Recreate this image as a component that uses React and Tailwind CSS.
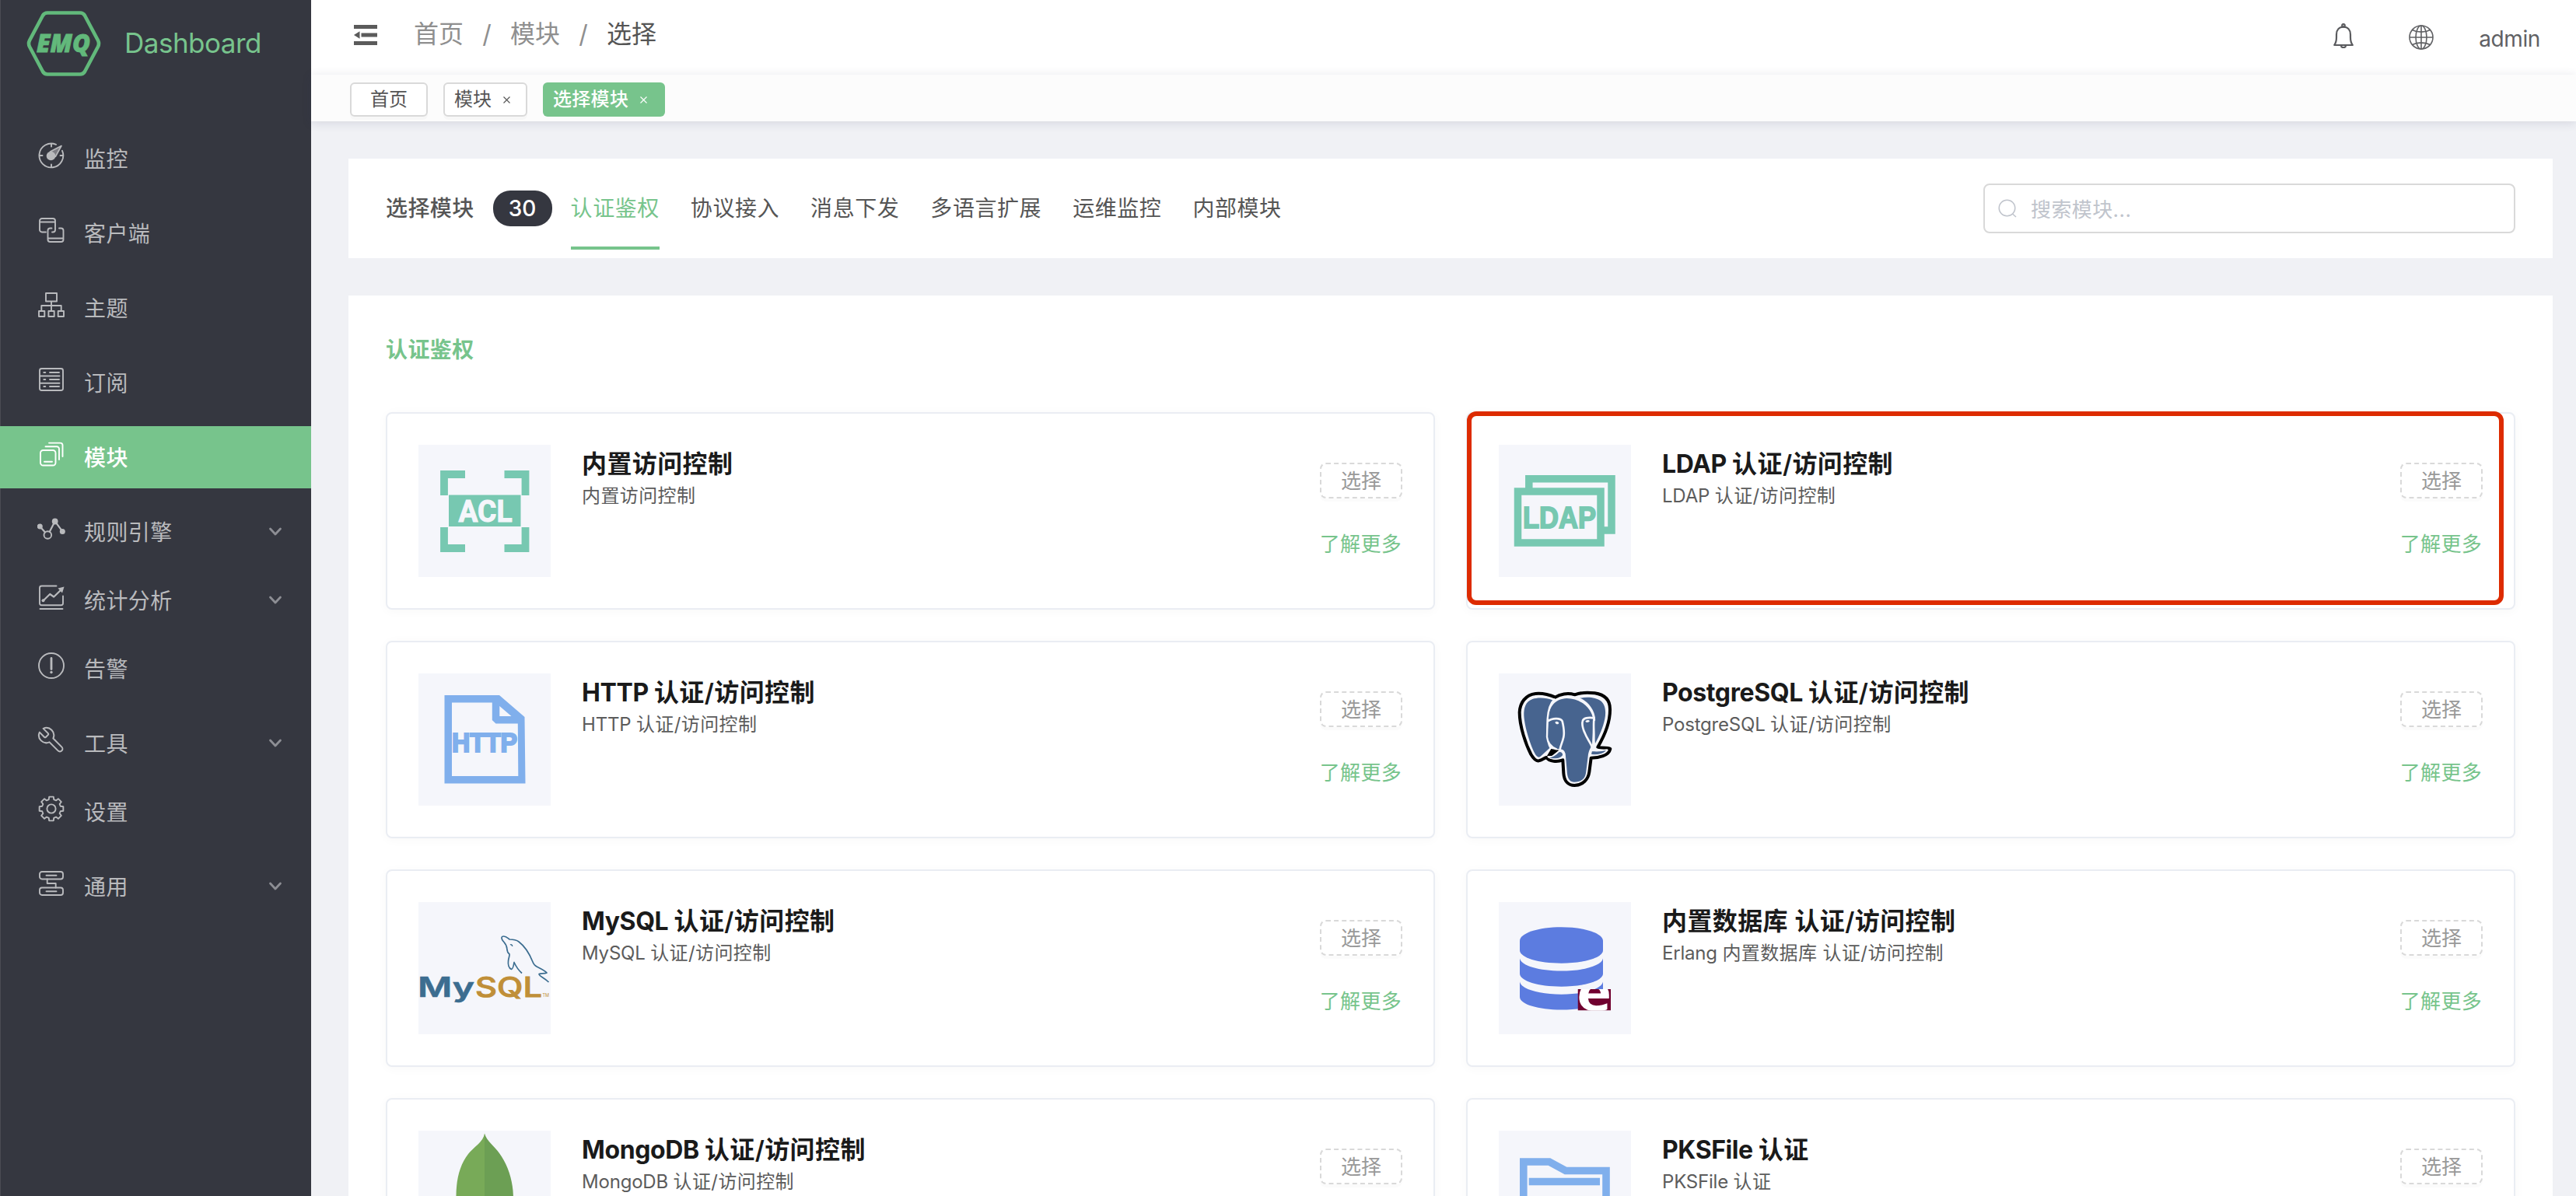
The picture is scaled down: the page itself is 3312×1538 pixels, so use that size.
import React from "react";

const FONT = "font-[Inter,'Noto_Sans_CJK_SC',sans-serif]";

/* ---------- sidebar icons ---------- */

function Glyph({ children }) {
  return (
    <svg
      className="h-9 w-9 shrink-0 -translate-y-1"
      viewBox="0 0 36 36"
      fill="none"
      stroke="currentColor"
      strokeWidth="1.9"
      strokeLinecap="round"
      strokeLinejoin="round"
    >
      {children}
    </svg>
  );
}

const gearPath = (() => {
  const pts = [];
  for (let i = 0; i < 8; i++) {
    const a = (i * Math.PI) / 4 - Math.PI / 2;
    for (const [d, r] of [[-0.27, 12.2], [-0.18, 15.6], [0.18, 15.6], [0.27, 12.2]]) {
      pts.push(`${(18 + r * Math.cos(a + d)).toFixed(2)} ${(18 + r * Math.sin(a + d)).toFixed(2)}`);
    }
  }
  return `M${pts.join("L")}Z`;
})();

const icons = {
  monitor: (
    <Glyph>
      <path d="M24 3.800A15.400 15.400 0 1 0 32 11.800" />
      <path d="M18 3v3.500M18 29.500V33M3 18h3.500M29.500 18H33" />
      <circle cx="17.500" cy="18.500" r="5.800" fill="currentColor" stroke="none" />
      <path d="M23.300 19.500L31 5.500L16.500 13L20 15.500Z" fill="currentColor" fillOpacity=".55" strokeWidth="1.600" />
    </Glyph>
  ),
  clients: (
    <Glyph>
      <path d="M11 20.5H6a3 3 0 0 1-3-3V6a3 3 0 0 1 3-3h14a3 3 0 0 1 3 3v5.5M3.5 7.5h19" />
      <path d="M18.5 15.5h-2a3 3 0 0 0-3 3V30a3 3 0 0 0 3 3h14a3 3 0 0 0 3-3V18.500a3 3 0 0 0-3-3H28M14 28.500h19M23 11.500v6a3 3 0 0 1-3 3h-1" />
    </Glyph>
  ),
  topics: (
    <Glyph>
      <path d="M11 3h14v10.500H11zM18 13.500V25M5.300 25v-6h25.400v6M2 26h7.300v7H2zM14.400 26h7.300v7h-7.300zM26.700 26H34v7h-7.300z" />
    </Glyph>
  ),
  subs: (
    <Glyph>
      <rect x="3" y="4" width="30" height="28" rx="2.5" />
      <path d="M3 13.500h25.500M3 22.700h25.500M8.300 9h2M16 9h12M8.300 18h2M16 18h12M8.300 27h2M16 27h12" />
    </Glyph>
  ),
  modules: (
    <Glyph>
      <rect x="4" y="13" width="19.500" height="19.500" rx="3.500" />
      <path d="M9 27.700h10M10.500 8.300H25a3 3 0 0 1 3 3V25M15 3.600h14.500a3 3 0 0 1 3 3V21" />
    </Glyph>
  ),
  rules: (
    <Glyph>
      <path d="M3.300 15l6.700 7.500M15.800 21.700l6.900-13.400M22.700 8.300l9.600 13" strokeWidth="2.200" />
      <circle cx="13.300" cy="26" r="4.800" />
      <g fill="currentColor" stroke="none">
        <circle cx="3.300" cy="15" r="3.500" />
        <circle cx="22.700" cy="8.500" r="3.900" />
        <circle cx="32.300" cy="21.500" r="3.500" />
      </g>
    </Glyph>
  ),
  stats: (
    <Glyph>
      <path d="M24.500 3.500H5.500a2.500 2.500 0 0 0-2.500 2.500v19.800a2.500 2.500 0 0 0 2.500 2.500h25a2.500 2.500 0 0 0 2.500-2.500V16.500M3.500 33h29" />
      <path d="M7.500 22.500l8.700-8.500 5 3.500L31 8" strokeWidth="2.200" />
      <circle cx="7.500" cy="22.300" r="2" fill="currentColor" stroke="none" />
      <path d="M34.500 4.500l-8 2 5.500 6z" fill="currentColor" stroke="none" />
    </Glyph>
  ),
  alarm: (
    <Glyph>
      <circle cx="18" cy="18" r="16" />
      <path d="M18 8.500v14" strokeWidth="2.800" />
      <circle cx="18" cy="26.500" r="1.700" fill="currentColor" stroke="none" />
    </Glyph>
  ),
  tools: (
    <Glyph>
      <g transform="translate(37.200 -1.200) scale(-1.600 1.600)" strokeWidth="1.250">
        <path d="M14.700 6.300a1 1 0 0 0 0 1.400l1.600 1.600a1 1 0 0 0 1.400 0l3.770-3.770a6 6 0 0 1-7.940 7.940l-6.910 6.910a2.120 2.120 0 0 1-3-3l6.910-6.910a6 6 0 0 1 7.940-7.940l-3.760 3.760z" />
      </g>
    </Glyph>
  ),
  settings: (
    <Glyph>
      <path d={gearPath} />
      <circle cx="18" cy="18" r="5.600" />
    </Glyph>
  ),
  general: (
    <Glyph>
      <rect x="3" y="3" width="30" height="9.500" rx="3" />
      <rect x="3" y="23.500" width="30" height="9.500" rx="3" />
      <path d="M11.500 7.700h13M11.500 28.200h13M12.700 12.500V18h11v5.500" />
    </Glyph>
  ),
};

const menu = [
  { icon: "monitor", label: "监控" },
  { icon: "clients", label: "客户端" },
  { icon: "topics", label: "主题" },
  { icon: "subs", label: "订阅" },
  { icon: "modules", label: "模块", active: true },
  { icon: "rules", label: "规则引擎", sub: true },
  { icon: "stats", label: "统计分析", sub: true },
  { icon: "alarm", label: "告警" },
  { icon: "tools", label: "工具", sub: true },
  { icon: "settings", label: "设置" },
  { icon: "general", label: "通用", sub: true },
];

function Sidebar() {
  return (
    <aside className="h-full w-[400px] shrink-0 border-l border-[#4a4b53] bg-[#353740]">
      <div className="flex h-28 items-center gap-[30px] pl-[33px]">
        <svg className="h-[86px] w-24" viewBox="0 0 96 86" fill="none">
          <path
            d="M27 3.500H69Q73 3.500 75 7L92 39Q94 43 92 47L75 79Q73 82.500 69 82.500H27Q23 82.500 21 79L4 47Q2 43 4 39L21 7Q23 3.500 27 3.500Z"
            stroke="#62b97b"
            strokeWidth="4.600"
          />
          <text
            x="13"
            y="54"
            fontFamily="Open Sans, sans-serif"
            fontSize="31"
            fontWeight="800"
            fontStyle="italic"
            textLength="69"
            lengthAdjust="spacingAndGlyphs"
            fill="#62b97b"
            stroke="#62b97b"
            strokeWidth=".8"
          >
            EMQ
          </text>
        </svg>
        <span className="-translate-y-px text-[35px] leading-none tracking-[-0.5px] text-[#77c48d]">Dashboard</span>
      </div>
      <nav className="mt-[52px]">
        {menu.map((m) => (
          <div
            key={m.label}
            className={
              "-ml-px flex h-20 items-center pl-12 pr-9 " +
              (m.active ? "bg-[#77c48c] text-white " : "text-[#b9babd] ") +
              (m.sub ? "mb-2" : "mb-4")
            }
          >
            {icons[m.icon]}
            <span className={"ml-6 flex-1 translate-y-px text-[28px] leading-10 tracking-[0.4px] " + (m.active ? "font-medium" : "")}>
              {m.label}
            </span>
            {m.sub && (
              <svg className="h-4 w-5 text-[#8d8e94]" viewBox="0 0 20 16" fill="none" stroke="currentColor" strokeWidth="2.800" strokeLinecap="round" strokeLinejoin="round">
                <path d="M3.500 4L10 11l6.500-7" />
              </svg>
            )}
          </div>
        ))}
      </nav>
    </aside>
  );
}

/* ---------- top area ---------- */

function Header() {
  return (
    <header className="flex h-24 shrink-0 items-center bg-white pl-[55px] pr-[46px]">
      <svg className="h-[26px] w-[30px] -translate-y-[3px]" viewBox="0 0 30 26" fill="#5b5b5b">
        <path d="M0 0h30v5H0zM9.500 10.500H30v5H9.500zM0 21h30v5H0zM0 13l7.500-4.800v9.600z" />
      </svg>
      <div className="ml-[47px] flex -translate-y-[4px] text-[32px] leading-[48px] text-[#8f8f8f]">
        <span>首页</span>
        <span className="w-[60px] text-center">/</span>
        <span>模块</span>
        <span className="w-[60px] text-center">/</span>
        <span className="text-[#555]">选择</span>
      </div>
      <div className="ml-auto flex items-center">
        <svg className="h-8 w-[26px] -translate-y-[2px]" viewBox="0 0 26 32" fill="none" stroke="#5a5b5e" strokeWidth="2.200" strokeLinejoin="round">
          <circle cx="13" cy="2.800" r="1.800" />
          <path d="M1.300 28C3.500 25 4 22 4 18V14.500C4 8.500 7.500 4.700 13 4.700S22 8.500 22 14.500V18c0 4 .5 7 2.700 10z" />
          <path d="M10 28.500a3 2.600 0 0 0 6 0" />
        </svg>
        <svg className="ml-[71px] h-8 w-8" viewBox="0 0 32 32" fill="none" stroke="#606164" strokeWidth="1.600">
          <circle cx="16" cy="16" r="15" />
          <ellipse cx="16" cy="16" rx="7" ry="15" />
          <path d="M1 16h30M16 1v30M4.500 6.500C11 10 21 10 27.500 6.500M4.500 25.500C11 22 21 22 27.500 25.500" />
        </svg>
        <span className="ml-[58px] translate-y-[2px] text-[28px] leading-10 tracking-[-0.4px] text-[#606164]">admin</span>
      </div>
    </header>
  );
}

function Cross() {
  return (
    <svg className="h-[9px] w-[9px]" viewBox="0 0 9 9" stroke="currentColor" strokeWidth="1.100">
      <path d="M.5.5l8 8M8.500.5l-8 8" />
    </svg>
  );
}

function TagBar() {
  return (
    <div className="relative flex h-[60px] shrink-0 gap-5 bg-[#fcfcfc] pl-[50px] pt-[10px] text-2xl leading-10 shadow-[0_2px_12px_rgba(40,50,90,0.14)]">
      <div className="flex h-11 w-[100px] items-center justify-center rounded-md border-2 border-[#d9d9d9] bg-white text-[#555] shadow-[0_4px_0_rgba(0,0,0,0.02)]">
        首页
      </div>
      <div className="flex h-11 w-[108px] items-center gap-[15px] rounded-md border-2 border-[#d9d9d9] bg-white pl-3 text-[#555] shadow-[0_4px_0_rgba(0,0,0,0.02)]">
        模块
        <Cross />
      </div>
      <div className="flex h-11 w-[157px] items-center gap-[15px] rounded-md bg-[#77c48c] pl-[13px] font-medium tracking-[0.3px] text-white">
        选择模块
        <Cross />
      </div>
    </div>
  );
}

const tabs = ["认证鉴权", "协议接入", "消息下发", "多语言扩展", "运维监控", "内部模块"];

function FilterBar() {
  return (
    <section className="flex h-32 items-center bg-white px-12 text-[28px] tracking-[0.4px] text-[#555]">
      <h1 className="font-medium">选择模块</h1>
      <span className="ml-[24px] flex h-[46px] w-[76px] items-center justify-center rounded-[22px] bg-[#353740] font-medium tracking-normal text-white">
        30
      </span>
      <nav className="ml-[24px] flex h-full items-end gap-[40px] pb-[11px] tracking-[0.56px]">
        {tabs.map((t, i) => (
          <span
            key={t}
            className={
              "flex h-[104px] items-center justify-center border-b-4 pt-px " +
              (i === 0 ? "border-[#77c48c] text-[#77c48c]" : "border-transparent")
            }
          >
            {t}
          </span>
        ))}
      </nav>
      <div className="ml-auto flex h-16 w-[684px] items-center rounded-lg border-2 border-[#d9d9d9] pl-[17px] text-[26px] text-[#c0c4cc]">
        <svg className="h-6 w-6" viewBox="0 0 24 24" fill="none" stroke="currentColor" strokeWidth="1.500">
          <circle cx="11.500" cy="11.500" r="10.300" />
          <path d="M18.500 19l4.500 4" />
        </svg>
        <span className="ml-[18px] translate-y-px">搜索模块...</span>
      </div>
    </section>
  );
}

/* ---------- module logos ---------- */

function Thumb({ children, box = "0 0 170 170" }) {
  return (
    <svg className="h-[170px] w-[170px] shrink-0 bg-[#f5f6fb]" viewBox={box} fill="none">
      {children}
    </svg>
  );
}

const logos = {
  acl: (
    <Thumb>
      <path d="M60 38H33v27M110.500 38h27v27M33 106v27h27M137.500 106v27h-27" stroke="#77c8b1" strokeWidth="9.800" />
      <path d="M39 64.500h92.500V105H39z" fill="#77c8b1" />
      <text x="51.500" y="98.500" fontFamily="Roboto, sans-serif" fontSize="38.500" fontWeight="700" textLength="69" lengthAdjust="spacingAndGlyphs" fill="#f5f6fb" stroke="#f5f6fb" strokeWidth="1">
        ACL
      </text>
    </Thumb>
  ),
  ldap: (
    <Thumb>
      <path d="M38.800 56V43.800H145V110h-10" stroke="#77c8b1" strokeWidth="9.500" />
      <path d="M24.500 60h106.500v66H24.500z" stroke="#77c8b1" strokeWidth="9.500" />
      <text x="31" y="107" fontFamily="Liberation Sans, sans-serif" fontSize="39.500" fontWeight="700" textLength="94" lengthAdjust="spacingAndGlyphs" fill="#77c8b1" stroke="#77c8b1" strokeWidth="1.900">
        LDAP
      </text>
    </Thumb>
  ),
  http: (
    <Thumb>
      <path
        fillRule="evenodd"
        d="M33.500 28H104L136.500 56L137.500 141.500H33.500ZM43 37.500V132H128.300L127.800 64.500H99.500L94.800 60V37.500ZM104.300 42V55H119.500Z"
        fill="#80afec"
      />
      <text x="43" y="100.500" fontFamily="Liberation Sans, sans-serif" fontSize="34.500" fontWeight="700" textLength="84" lengthAdjust="spacingAndGlyphs" fill="#80afec" stroke="#80afec" strokeWidth="2.200">
        HTTP
      </text>
    </Thumb>
  ),
  pg: (
    <Thumb box="0 0 510 510">
      <g strokeLinejoin="round" strokeLinecap="round">
        <path
          d="M218 92C190 80 165 76 142 78C103 83 82 112 80 150C80 205 105 275 124 312C136 332 148 340 157 336C166 334 178 325 184 324C195 340 225 342 247 334L250 385C252 415 268 432 292 432C325 431 345 408 349 380L356 326C385 326 425 318 430 291C428 284 400 290 382 284C405 245 430 190 429 138C429 105 410 82 370 76C340 72 315 74 293 82C265 74 235 80 218 92Z"
          fill="#f5f6fb"
          stroke="#000"
          strokeWidth="12"
        />
        <path d="M186 318L202 291L232 296L205 318Z" fill="#000" />
        <path d="M212 105C180 92 150 93 130 99C103 108 96 135 97 163C100 210 122 275 138 307C146 322 153 326 160 321L196 288C182 265 183 220 186 175C190 145 200 120 212 105Z" fill="#47648f" />
        <path d="M312 96C340 88 375 92 395 107C412 122 414 150 409 175C402 210 388 240 372 270C366 240 370 200 368 165C362 135 340 110 312 96Z" fill="#47648f" />
        <path d="M192 172C194 125 220 98 262 96C315 96 362 135 364 182L360 276C352 290 346 300 344 320L336 385C332 410 315 419 290 419C270 418 264 400 263 375L257 310C254 296 245 290 232 292C205 288 188 270 187 245Z" fill="#47648f" />
        <path d="M214 100C196 118 190 145 188 175L186 245C188 268 203 284 222 292M308 96C345 112 368 145 369 180" stroke="#f5f6fb" strokeWidth="7" />
        <path d="M190 184C205 172 238 170 245 184C250 205 254 225 250 245C245 268 238 278 236 293M368 172C345 168 325 172 323 185C320 200 325 215 332 230C340 252 355 268 360 285M368 172C362 200 372 240 364 285" stroke="#f5f6fb" strokeWidth="8" />
        <path d="M190 323C205 324 222 312 230 303C240 298 250 306 248 316C240 332 205 334 190 323ZM358 298C375 300 395 300 418 294C410 310 380 318 355 313Z" fill="#47648f" stroke="#f5f6fb" strokeWidth="4" />
        <path d="M217 188C221 183 230 184 232 191C229 199 220 197 217 188ZM334 185C338 179 348 179 351 184C347 190 338 191 334 185Z" fill="#f5f6fb" />
      </g>
    </Thumb>
  ),
  mysql: (
    <Thumb>
      <path
        d="M133 91.500C129 88 126 84 123 77.500C122.500 81 121.500 86 119.500 86.500C116 85 115 80 115.500 76C115.800 72 117.500 69 117 67C115 65.500 114 64 113.800 60C113.500 54 110 52 108 49C106 45.500 107 44 109.500 44C113 44 115 46.500 117 48C121 48 125 48 129 51C137 57 143 67 147 77C148 80 150 82 153 83.500C158 86 163 88.500 165 91C162 92.500 158 91.500 155 92.500C156 96 161 97 167.500 103"
        stroke="#3c6d90"
        strokeWidth="1.700"
        strokeLinejoin="round"
      />
      <path d="M118 55c1-1 2.500 0 2.800 2" stroke="#3c6d90" strokeWidth="1.300" />
      <text x="-1" y="121.500" fontFamily="Inter, sans-serif" fontSize="35" fontWeight="600" textLength="73" lengthAdjust="spacingAndGlyphs" fill="#3c6d90" stroke="#3c6d90" strokeWidth=".6">
        My
      </text>
      <text x="73" y="121.500" fontFamily="Inter, sans-serif" fontSize="35" fontWeight="500" textLength="86" lengthAdjust="spacingAndGlyphs" fill="#c08f38" stroke="#c08f38" strokeWidth=".9">
        SQL
      </text>
      <text x="159.500" y="121.500" fontFamily="Inter, sans-serif" fontSize="5.500" textLength="8.500" lengthAdjust="spacingAndGlyphs" fill="#c08f38">
        TM
      </text>
    </Thumb>
  ),
  db: (
    <Thumb>
      <g fill="#5c7ce0">
        <path d="M27 50C27 40 51 32.300 80.500 32.300S134 40 134 50V62C134 71.500 110 78.700 80.500 78.700S27 71.500 27 62Z" />
        <path d="M27 72.500C29 82 52 88.500 80.500 88.500S132 82 134 72.500V92C134 101.500 110 108.700 80.500 108.700S27 101.500 27 92Z" />
        <path d="M27 102.500C29 112 52 118.700 80.500 118.700S132 112 134 102.500V122C134 131.500 110 138.500 80.500 138.500S27 131.500 27 122Z" />
      </g>
      <svg x="101.500" y="112" width="42.500" height="27.500" viewBox="0 0 42.500 27.500">
        <path d="M0 0h42.500v27.500H0z" fill="#70002f" />
        <text x="-1.500" y="27.500" fontFamily="Open Sans, sans-serif" fontSize="66" fontWeight="700" textLength="45" lengthAdjust="spacingAndGlyphs" fill="#fff">
          e
        </text>
      </svg>
    </Thumb>
  ),
  mongo: (
    <Thumb>
      <path d="M85 3.500C84 14 70 22 64 30C53 44 48 64 48.500 88C50 115 65 135 85 148Z" fill="#78aa58" />
      <path d="M85 3.500C88 14 98 20 104 29C115 44 122 64 122 88C120 115 106 135 85 148Z" fill="#6c9f54" />
    </Thumb>
  ),
  pks: (
    <Thumb>
      <path d="M31.800 140V40H65L86 51.500h52V140Z" stroke="#80afec" strokeWidth="9.600" />
      <path d="M38.700 60.700H130v9.600H38.700z" fill="#80afec" />
      <text x="47" y="112.500" fontFamily="Roboto, sans-serif" fontSize="41" fontWeight="700" textLength="76" lengthAdjust="spacingAndGlyphs" fill="#80afec">
        PSK
      </text>
    </Thumb>
  ),
};

const modules = [
  { logo: "acl", title: "内置访问控制", desc: "内置访问控制" },
  { logo: "ldap", name: "LDAP", title: "认证/访问控制", desc: "认证/访问控制", marked: true },
  { logo: "http", name: "HTTP", title: "认证/访问控制", desc: "认证/访问控制" },
  { logo: "pg", name: "PostgreSQL", title: "认证/访问控制", desc: "认证/访问控制" },
  { logo: "mysql", name: "MySQL", title: "认证/访问控制", desc: "认证/访问控制" },
  { logo: "db", title: "内置数据库 认证/访问控制", lead: "Erlang", desc: "内置数据库 认证/访问控制" },
  { logo: "mongo", name: "MongoDB", title: "认证/访问控制", desc: "认证/访问控制" },
  { logo: "pks", name: "PKSFile", title: "认证", desc: "认证" },
];

function Latin({ children, className }) {
  return children ? <span className={className}>{children} </span> : null;
}

function ModuleCard({ logo, name, lead, title, desc, marked }) {
  return (
    <article className="relative flex h-[254px] rounded-lg border-2 border-[#eaedf3] bg-white p-10 shadow-[0_2px_14px_rgba(0,0,0,0.03)]">
      {logos[logo]}
      <div className="ml-10 flex-1 whitespace-nowrap tracking-[0.4px]">
        <h3 className="translate-y-px text-[32px] font-semibold leading-[48px] text-[#1a1a1a]">
          <Latin className="font-bold tracking-[-0.4px]">{name}</Latin>
          {title}
        </h3>
        <p className="text-2xl leading-9 text-[#5c5c5c]">
          <Latin className="tracking-[-0.2px]">{lead || name}</Latin>
          {desc}
        </p>
      </div>
      <div className="flex flex-col items-end pt-[23px] text-[26px]">
        <button className="h-[46px] w-[106px] rounded-lg border-2 border-dashed border-[#d9d9d9] leading-[41px] text-[#999] shadow-[0_4px_0_rgba(0,0,0,0.015)]">
          选择
        </button>
        <a className="mr-px mt-[39px] leading-10 tracking-[0.3px] text-[#77c48c]">了解更多</a>
      </div>
      {marked && (
        <div className="absolute -left-px -top-[3px] h-[249px] w-[1333px] rounded-xl border-[6px] border-[#dd2b00]" />
      )}
    </article>
  );
}

export default function App() {
  return (
    <div className={`flex h-[1538px] w-[3312px] overflow-hidden bg-[#f0f1f5] ${FONT}`}>
      <Sidebar />
      <div className="flex min-w-0 flex-1 flex-col">
        <Header />
        <TagBar />
        <main className="flex flex-col gap-12 pl-12 pr-[30px] pt-12">
          <FilterBar />
          <section className="bg-white px-12 pb-12 pt-[50px]">
            <h2 className="text-[28px] font-semibold leading-10 tracking-[0.4px] text-[#77c48c]">认证鉴权</h2>
            <div className="mt-[60px] grid grid-cols-2 gap-10">
              {modules.map((m) => (
                <ModuleCard key={m.logo} {...m} />
              ))}
            </div>
          </section>
        </main>
      </div>
    </div>
  );
}
